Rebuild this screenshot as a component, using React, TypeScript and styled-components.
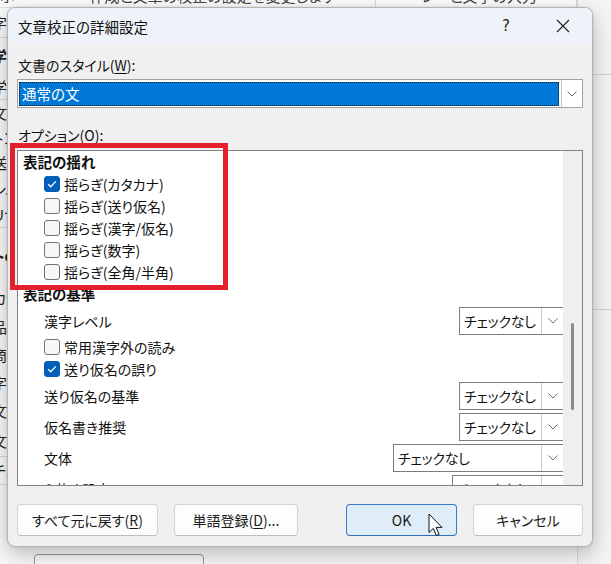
import React from "react";
import styled, { createGlobalStyle } from "styled-components";

const JP = `"Noto Sans CJK JP", "Noto Sans", sans-serif`;

const GlobalStyle = createGlobalStyle`
  html, body { margin: 0; padding: 0; }
  body { background: #f3f3f3; font-family: ${JP}; }
  #root { width: 611px; height: 564px; }
`;

const Screen = styled.div`
  position: relative;
  width: 611px;
  height: 564px;
  overflow: hidden;
  background: #f3f3f3;
  font-family: ${JP};
  font-feature-settings: "palt" 1;
  color: #1a1a1a;
`;

/* ---------- window behind the dialog ---------- */
const BackWindow = styled.div`
  display: grid;
  grid-template-columns: 577px 1fr;
  width: 611px;
  height: 564px;
`;

const BackMain = styled.div`
  display: flex;
  flex-direction: column;
  background: #fbfbfb;
  overflow: hidden;
`;

const BackTopStrip = styled.div`
  height: 7px;
  overflow: hidden;
  display: flex;
  border-bottom: 1px solid #e2e2e2;
`;

const BackTopText = styled.div<{ $w: number }>`
  width: ${(p) => p.$w}px;
  margin-top: -14px;
  font-size: 15px;
  line-height: 20px;
  white-space: nowrap;
  overflow: hidden;
  border-right: 1px solid #d8d8d8;
  color: #444;
`;

const BackList = styled.div`
  display: flex;
  flex-direction: column;
  margin-left: -8px;
`;

const BackRow = styled.div<{ $h: number; $bold?: boolean; $line?: boolean }>`
  height: ${(p) => p.$h}px;
  line-height: ${(p) => p.$h}px;
  font-size: 15px;
  font-weight: ${(p) => (p.$bold ? 700 : 400)};
  color: #222;
  width: 60px;
  box-sizing: border-box;
  border-bottom: ${(p) => (p.$line ? "1px solid #d6d6d6" : "none")};
  white-space: nowrap;
`;

const BackBottomButton = styled.div`
  margin-top: auto;
  margin-left: 34px;
  margin-bottom: -14px;
  width: 168px;
  height: 22px;
  border: 1px solid #9a9a9a;
  border-radius: 4px;
  background: #fdfdfd;
`;

const BackSide = styled.div`
  display: flex;
  flex-direction: column;
  background: #f5f5f5;
  border-left: 1px solid #dadada;
`;

const BackSideCell = styled.div<{ $h: number }>`
  height: ${(p) => p.$h}px;
  border-bottom: 1px solid #d4d4d4;
`;

/* ---------- dialog ---------- */
const Dialog = styled.div`
  position: absolute;
  left: 7px;
  top: 7px;
  width: 586px;
  height: 540px;
  box-sizing: border-box;
  border: 1px solid #b4b4b4;
  border-radius: 8px;
  background: #f0f0f0;
  box-shadow: 0 8px 22px rgba(0, 0, 0, 0.26), 0 0 3px rgba(0, 0, 0, 0.12);
  display: flex;
  flex-direction: column;
  overflow: hidden;
`;

const TitleBar = styled.div`
  height: 35px;
  flex: none;
  display: flex;
  align-items: center;
  padding-left: 10px;
  background: #eef3f9;
`;

const TitleText = styled.div`
  flex: 1;
  font-size: 14.5px;
  padding-top: 2px;
  color: #111;
`;

const TitleButton = styled.div<{ $w: number }>`
  width: ${(p) => p.$w}px;
  height: 35px;
  display: flex;
  align-items: center;
  justify-content: center;
  font-family: "DejaVu Sans", "Liberation Sans", sans-serif;
  font-size: 15px;
  color: #222;
`;

const TitleGap = styled.div<{ $w: number }>`
  width: ${(p) => p.$w}px;
`;

const Body = styled.div`
  flex: 1;
  display: flex;
  flex-direction: column;
  padding: 11px 9px 0 9px;
`;

const FieldLabel = styled.div<{ $mt?: number }>`
  height: 22px;
  line-height: 22px;
  font-size: 14px;
  padding-left: 1px;
  margin-top: ${(p) => p.$mt ?? 0}px;
  color: #111;
`;

const Mnemonic = styled.span`
  text-decoration: underline;
  text-underline-offset: 2px;
`;

const StyleSelect = styled.div`
  margin-top: 3px;
  height: 29px;
  box-sizing: border-box;
  display: flex;
  border: 1px solid #a3a3a3;
  background: #fff;
`;

const SelectValue = styled.div`
  flex: 1;
  margin: 2px 2px 1px 1px;
  background: #0078d7;
  color: #fff;
  border: 1px dotted #1b1b1b;
  font-size: 14.5px;
  line-height: 21px;
  padding-left: 2px;
`;

const DropButton = styled.div<{ $w: number }>`
  width: ${(p) => p.$w}px;
  flex: none;
  display: flex;
  align-items: center;
  justify-content: center;
  border-left: 1px solid #c9c9c9;
  background: #fff;
`;

const ListBox = styled.div`
  margin-top: 4px;
  height: 336px;
  box-sizing: border-box;
  border: 1px solid #838383;
  background: #fff;
  display: flex;
`;

const ListContent = styled.div`
  flex: 1;
  overflow: hidden;
  padding-left: 5px;
  display: flex;
  flex-direction: column;
`;

const ScrollTrack = styled.div`
  width: 19px;
  flex: none;
  background: #efefef;
  padding-top: 172px;
  box-sizing: border-box;
`;

const ScrollThumb = styled.div`
  width: 3px;
  height: 87px;
  margin-left: 8px;
  border-radius: 2px;
  background: #8a8a8a;
`;

const SectionHeading = styled.div`
  height: 22px;
  flex: none;
  line-height: 22px;
  font-size: 14.5px;
  font-weight: 700;
  color: #111;
`;

const CheckRow = styled.div<{ $h?: number }>`
  height: ${(p) => p.$h ?? 22}px;
  flex: none;
  display: flex;
  align-items: center;
  gap: 4px;
  padding-left: 21px;
  font-size: 14px;
  color: #111;
  white-space: nowrap;
`;

const Box = styled.div<{ $on?: boolean }>`
  width: 16px;
  height: 16px;
  flex: none;
  box-sizing: border-box;
  border-radius: 3px;
  border: 1px solid ${(p) => (p.$on ? "#005fb8" : "#737373")};
  background: ${(p) => (p.$on ? "#005fb8" : "#f7f7f7")};
  display: flex;
  align-items: center;
  justify-content: center;
`;

const ComboRow = styled.div`
  height: 31px;
  flex: none;
  display: flex;
  align-items: center;
  justify-content: space-between;
  padding-left: 21px;
  font-size: 14px;
  color: #111;
  white-space: nowrap;
`;

const Combo = styled.div<{ $w: number }>`
  width: ${(p) => p.$w}px;
  height: 28px;
  flex: none;
  box-sizing: border-box;
  margin-right: -1px;
  border: 1px solid #7c7c7c;
  background: #fff;
  display: flex;
`;

const ComboText = styled.div`
  flex: 1;
  min-width: 0;
  overflow: hidden;
  white-space: nowrap;
  padding-left: 4px;
  font-size: 14px;
  letter-spacing: -0.3px;
  line-height: 26px;
  color: #111;
`;

const Footer = styled.div`
  margin-top: 18px;
  display: flex;
  align-items: center;
  gap: 16px;
`;

const Spacer = styled.div`
  flex: 1;
`;

const Button = styled.div<{ $w: number; $primary?: boolean }>`
  width: ${(p) => p.$w}px;
  height: 32px;
  box-sizing: border-box;
  border-radius: 4px;
  border: 1px solid ${(p) => (p.$primary ? "#3a7cc2" : "#d3d3d3")};
  border-bottom-color: ${(p) => (p.$primary ? "#2f6fb3" : "#bdbdbd")};
  background: ${(p) => (p.$primary ? "#dfedf9" : "#fdfdfd")};
  display: flex;
  align-items: center;
  justify-content: center;
  font-size: 14px;
  color: #1a1a1a;
  white-space: nowrap;
`;

const ButtonGroup = styled.div`
  display: flex;
  gap: 16px;
`;

/* ---------- overlays ---------- */
const RedFrame = styled.div`
  position: absolute;
  left: 10px;
  top: 143px;
  width: 218px;
  height: 147px;
  box-sizing: border-box;
  border: 5px solid #e3202b;
  pointer-events: none;
`;

const Cursor = styled.svg`
  position: absolute;
  left: 428px;
  top: 513px;
`;

const Chevron = () => (
  <svg width="10" height="6" viewBox="0 0 10 6">
    <polyline points="0.5,0.5 5,5 9.5,0.5" fill="none" stroke="#6a6a6a" strokeWidth="1" />
  </svg>
);

const Check = () => (
  <svg width="12" height="12" viewBox="0 0 12 12">
    <polyline points="2.2,6.2 4.8,8.8 9.8,3.4" fill="none" stroke="#fff" strokeWidth="1.3" />
  </svg>
);

const CheckItem = ({ label, on, h }: { label: string; on?: boolean; h?: number }) => (
  <CheckRow $h={h}>
    <Box $on={on}>{on && <Check />}</Box>
    <span>{label}</span>
  </CheckRow>
);

const ComboItem = ({ label, w }: { label: string; w: number }) => (
  <ComboRow>
    <span>{label}</span>
    <Combo $w={w}>
      <ComboText>チェックなし</ComboText>
      <DropButton $w={21}>
        <Chevron />
      </DropButton>
    </Combo>
  </ComboRow>
);

const backRows: { t: string; h: number; bold?: boolean; line?: boolean }[] = [
  { t: "字た", h: 30, line: true },
  { t: "学o", h: 36, bold: true },
  { t: "学ぺ", h: 26, line: true },
  { t: "文字", h: 25 },
  { t: "トン", h: 25 },
  { t: "送り", h: 26 },
  { t: "シハ", h: 25 },
  { t: "リザ", h: 27, line: true },
  { t: "トo", h: 55, bold: true },
  { t: "カナ", h: 30 },
  { t: "品種", h: 28 },
  { t: "商品", h: 28 },
  { t: "字幕", h: 28 },
  { t: "文書", h: 28 },
  { t: "文の", h: 32, line: true },
  { t: "チエ", h: 28, line: true },
];

export default function App() {
  return (
    <>
      <GlobalStyle />
      <Screen>
        <BackWindow>
          <BackMain>
            <BackTopStrip>
              <BackTopText $w={376}>ホ　　　　　作成と文章の校正の設定を変更します</BackTopText>
              <BackTopText $w={200}>　　　レーと文字の入力</BackTopText>
            </BackTopStrip>
            <BackList>
              {backRows.map((r, i) => (
                <BackRow key={i} $h={r.h} $bold={r.bold} $line={r.line}>
                  {r.t}
                </BackRow>
              ))}
            </BackList>
            <BackBottomButton />
          </BackMain>
          <BackSide>
            <BackSideCell $h={74} />
            <BackSideCell $h={234} />
          </BackSide>
        </BackWindow>

        <Dialog>
          <TitleBar>
            <TitleText>文章校正の詳細設定</TitleText>
            <TitleButton $w={40}>?</TitleButton>
            <TitleGap $w={14} />
            <TitleButton $w={46}>
              <svg width="14" height="14" viewBox="0 0 14 14">
                <path d="M1 1 L13 13 M13 1 L1 13" stroke="#1f1f1f" strokeWidth="1.1" fill="none" />
              </svg>
            </TitleButton>
            <TitleGap $w={6} />
          </TitleBar>

          <Body>
            <FieldLabel>
              文書のスタイル(<Mnemonic>W</Mnemonic>):
            </FieldLabel>
            <StyleSelect>
              <SelectValue>通常の文</SelectValue>
              <DropButton $w={20}>
                <Chevron />
              </DropButton>
            </StyleSelect>

            <FieldLabel $mt={16}>オプション(O):</FieldLabel>
            <ListBox>
              <ListContent>
                <SectionHeading>表記の揺れ</SectionHeading>
                <CheckItem label="揺らぎ(カタカナ)" on />
                <CheckItem label="揺らぎ(送り仮名)" />
                <CheckItem label="揺らぎ(漢字/仮名)" />
                <CheckItem label="揺らぎ(数字)" />
                <CheckItem label="揺らぎ(全角/半角)" />
                <SectionHeading>表記の基準</SectionHeading>
                <ComboItem label="漢字レベル" w={105} />
                <CheckItem label="常用漢字外の読み" />
                <CheckItem label="送り仮名の誤り" on />
                <ComboItem label="送り仮名の基準" w={105} />
                <ComboItem label="仮名書き推奨" w={105} />
                <ComboItem label="文体" w={171} />
                <ComboItem label="ら抜き設定" w={112} />
              </ListContent>
              <ScrollTrack>
                <ScrollThumb />
              </ScrollTrack>
            </ListBox>

            <Footer>
              <ButtonGroup>
                <Button $w={141}>
                  すべて元に戻す(<Mnemonic>R</Mnemonic>)
                </Button>
                <Button $w={124}>
                  単語登録(<Mnemonic>D</Mnemonic>)...
                </Button>
              </ButtonGroup>
              <Spacer />
              <ButtonGroup>
                <Button $w={111} $primary>
                  OK
                </Button>
                <Button $w={110}>キャンセル</Button>
              </ButtonGroup>
            </Footer>
          </Body>
        </Dialog>

        <RedFrame />

        <Cursor width="16" height="25" viewBox="0 0 16 25">
          <path
            d="M1 1 L1 19.5 L5.3 15.4 L8.4 22.6 L11.1 21.4 L8.1 14.4 L14 14.4 Z"
            fill="#fff"
            stroke="#111"
            strokeWidth="1"
            strokeLinejoin="round"
          />
        </Cursor>
      </Screen>
    </>
  );
}
